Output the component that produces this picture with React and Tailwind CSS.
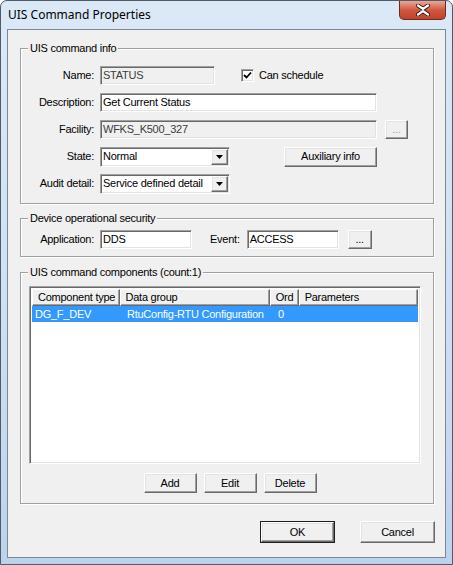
import React from "react";

const sunken =
  "border border-t-[#a0a0a0] border-l-[#a0a0a0] border-r-white border-b-white shadow-[inset_1px_1px_0_#696969,inset_-1px_-1px_0_#e3e3e3]";
const raised =
  "border border-t-white border-l-white border-r-[#696969] border-b-[#696969] shadow-[inset_-1px_-1px_0_#a0a0a0,inset_1px_1px_0_#e3e3e3] bg-[#f0f0f0]";

const Field = ({ value, width, disabled }) => (
  <div
    className={`${sunken} ${width} h-[19px] flex items-center pl-[2px] ${
      disabled ? "bg-[#f0f0f0] text-[#3c3c3c]" : "bg-white text-black"
    }`}
  >
    {value}
  </div>
);

const Button = ({ label, className = "", disabled }) => (
  <div
    className={`${raised} ${className} flex items-center justify-center ${
      disabled ? "text-[#a0a0a0]" : "text-black"
    }`}
  >
    {label}
  </div>
);

const Select = ({ value }) => (
  <div className={`${sunken} w-[130px] h-[20px] bg-white flex items-center`}>
    <span className="flex-1 pl-[2px] whitespace-nowrap">{value}</span>
    <div className={`${raised} w-[17px] h-[16px] mr-[1px] shrink-0 flex items-center justify-center`}>
      <svg width="7" height="4" viewBox="0 0 7 4">
        <path d="M0 0h7L3.5 4z" fill="#000" />
      </svg>
    </div>
  </div>
);

const Group = ({ title, className = "", children }) => (
  <fieldset
    className={`border border-[#a0a0a0] shadow-[inset_1px_1px_0_#fff,1px_1px_0_#fff] min-w-0 ${className}`}
  >
    <legend className="ml-[7px] px-[2px] leading-[14px] bg-[#f0f0f0]">{title}</legend>
    {children}
  </fieldset>
);

const Label = ({ children }) => (
  <span className="w-[73px] text-right mr-[6px] shrink-0">{children}</span>
);

export default function App() {
  return (
    <div className="w-[453px] h-[565px] flex flex-col border border-[#4f5b68] rounded-t-[7px] bg-gradient-to-b from-[#dbe9f7] via-[#cfe1f4] to-[#bdd3ec] overflow-hidden font-['Liberation_Sans',Arial,sans-serif] text-[11px] tracking-[-0.25px] text-black">
      {/* Title bar */}
      <div className="h-[28px] flex items-start justify-between shrink-0">
        <span className="pl-[7px] pt-[6px] text-[12px] tracking-normal font-['Noto_Sans',sans-serif] leading-[16px] text-black">
          UIS Command Properties
        </span>
        <div className="mr-[6px] w-[47px] h-[19px] rounded-b-[5px] border border-t-0 border-[#6b2a20] bg-gradient-to-b from-[#e8a898] via-[#d0573f] to-[#c2412b] flex items-center justify-center">
          <svg width="16" height="12" viewBox="0 0 16 12">
            <path
              d="M3 1.5L8 5L13 1.5M3 10.5L8 7L13 10.5"
              stroke="#3b1712"
              strokeWidth="4"
              strokeLinecap="round"
              fill="none"
            />
            <path
              d="M3 1.5L8 5L13 1.5M3 10.5L8 7L13 10.5"
              stroke="#fff"
              strokeWidth="2.2"
              strokeLinecap="round"
              fill="none"
            />
          </svg>
        </div>
      </div>

      {/* Client area */}
      <div className="flex-1 mx-[6px] mb-[6px] border border-[#7b8896] bg-[#f0f0f0] pl-[12px] pr-[11px] pt-[11px] flex flex-col">
        <Group title="UIS command info">
          <div className="flex flex-col gap-[8px] pt-[11px] pb-[10px]">
            <div className="flex items-center h-[19px]">
              <Label>Name:</Label>
              <Field value="STATUS" width="w-[115px]" disabled />
              <div className={`${sunken} ml-[26px] w-[13px] h-[13px] bg-white flex items-center justify-center`}>
                <svg width="9" height="9" viewBox="0 0 9 9">
                  <path d="M1 4l2.5 2.5L8 1.5" stroke="#000" strokeWidth="1.8" fill="none" />
                </svg>
              </div>
              <span className="ml-[5px]">Can schedule</span>
            </div>
            <div className="flex items-center h-[19px]">
              <Label>Description:</Label>
              <Field value="Get Current Status" width="w-[277px]" />
            </div>
            <div className="flex items-center h-[19px]">
              <Label>Facility:</Label>
              <Field value="WFKS_K500_327" width="w-[277px]" disabled />
              <Button label="..." className="ml-[8px] w-[23px] h-[19px]" disabled />
            </div>
            <div className="flex items-center h-[19px]">
              <Label>State:</Label>
              <Select value="Normal" />
              <Button label="Auxiliary info" className="ml-[54px] w-[93px] h-[20px]" />
            </div>
            <div className="flex items-center h-[19px]">
              <Label>Audit detail:</Label>
              <Select value="Service defined detail" />
            </div>
          </div>
        </Group>

        <Group title="Device operational security" className="mt-[7px]">
          <div className="flex items-center h-[19px] mt-[5px] mb-[7px]">
            <Label>Application:</Label>
            <Field value="DDS" width="w-[92px]" />
            <span className="ml-[18px] mr-[7px]">Event:</span>
            <Field value="ACCESS" width="w-[92px]" />
            <Button label="..." className="ml-[9px] w-[24px] h-[19px]" />
          </div>
        </Group>

        <Group title="UIS command components (count:1)" className="mt-[8px]">
          <div className="flex flex-col pt-[7px] pb-[10px]">
            <div className={`${sunken} ml-[8px] mr-[12px] h-[178px] bg-white p-[2px] flex flex-col`}>
              <div className="flex h-[17px] shrink-0">
                {[
                  ["Component type", "w-[88px]"],
                  ["Data group", "w-[151px]"],
                  ["Ord", "w-[29px]"],
                  ["Parameters", "w-[120px]"],
                ].map(([h, w]) => (
                  <div
                    key={h}
                    className={`${w} h-[17px] bg-[#f0f0f0] border border-t-white border-l-white border-r-[#696969] border-b-[#696969] shadow-[inset_-1px_-1px_0_#a0a0a0] pl-[5px] leading-[15px] whitespace-nowrap overflow-hidden`}
                  >
                    {h}
                  </div>
                ))}
              </div>
              <div className="flex h-[16px] bg-[#3399ff] text-white leading-[16px]">
                <span className="w-[88px] pl-[3px]">DG_F_DEV</span>
                <span className="w-[151px] pl-[7px] whitespace-nowrap">RtuConfig-RTU Configuration</span>
                <span className="w-[29px] pl-[7px]">0</span>
                <span className="flex-1" />
              </div>
            </div>
            <div className="flex justify-center gap-[7px] mt-[9px] pl-[6px]">
              <Button label="Add" className="w-[53px] h-[20px]" />
              <Button label="Edit" className="w-[53px] h-[20px]" />
              <Button label="Delete" className="w-[53px] h-[20px]" />
            </div>
          </div>
        </Group>

        <div className="flex justify-end gap-[25px] mt-[17px] mr-[-1px]">
          <div className="border border-[#1f1f1f]">
            <Button label="OK" className="w-[73px] h-[20px]" />
          </div>
          <Button label="Cancel" className="w-[75px] h-[22px]" />
        </div>
      </div>
    </div>
  );
}
